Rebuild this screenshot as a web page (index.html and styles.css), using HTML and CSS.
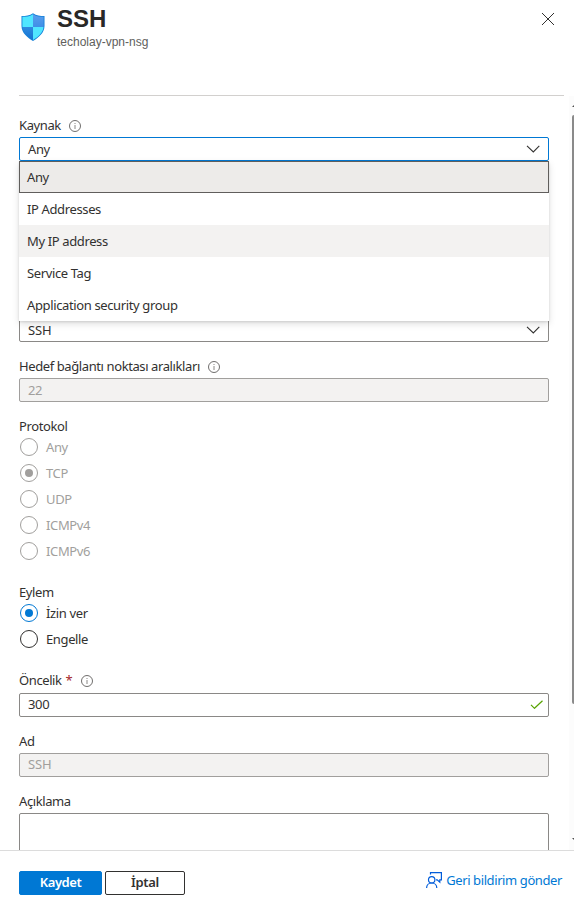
FILE: index.html
```html
<!DOCTYPE html>
<html lang="tr">
<head>
<meta charset="utf-8">
<title>SSH</title>
<link rel="stylesheet" href="styles.css">
</head>
<body>
<svg width="0" height="0" class="defs">
  <defs>
    <linearGradient id="blade-a" x1="0" y1="0" x2="0" y2="1"><stop offset="0" stop-color="#5ea0ef"/><stop offset="1" stop-color="#3f8fe6"/></linearGradient>
    <linearGradient id="blade-b" x1="0" y1="0" x2="0" y2="1"><stop offset="0" stop-color="#2f8ae0"/><stop offset="1" stop-color="#0f70d0"/></linearGradient>
    <clipPath id="shield"><path d="M12 2.200C15.500 4.600 19 4.800 22.600 4.800V14C22.600 20.500 17 24.800 12 28C7 24.800 1.400 20.500 1.400 14V4.800C5 4.800 8.500 4.600 12 2.200Z"/></clipPath>
    <symbol id="info" viewBox="0 0 12 12"><circle cx="6" cy="6" r="5.500" fill="none" stroke="#605e5c" stroke-width=".9"/><path d="M6 5v4M6 3v1" stroke="#8a8886" stroke-width="1"/></symbol>
    <symbol id="chevron" viewBox="0 0 14 8"><path d="M1 .9 7.300 7 13.300.9" fill="none" stroke="#323130" stroke-width="1.100"/></symbol>
  </defs>
</svg>
<div class="blade">
  <header class="header">
    <svg class="shield" width="25" height="30" viewBox="0 0 25 30">
      <path d="M12 1.200C15.500 3.800 19 4 23.500 4V14C23.500 21 17.500 25.600 12 29C6.500 25.600.5 21 .5 14V4C5 4 8.500 3.800 12 1.200Z" fill="#1580d8"/>
      <g clip-path="url(#shield)">
        <path d="M0 0h12v15H0zM12 15h13v15H12z" fill="#50e6ff"/>
        <path d="M12 0h13v15H12z" fill="url(#blade-a)"/>
        <path d="M0 15h12v15H0z" fill="url(#blade-b)"/>
      </g>
    </svg>
    <div class="titles">
      <h1 class="title">SSH</h1>
      <div class="subtitle">techolay-vpn-nsg</div>
    </div>
    <svg class="close" width="14" height="14" viewBox="0 0 14 14"><path d="M1 1l12 12M13 1 1 13" stroke="#323130" stroke-width="1"/></svg>
  </header>

  <main class="content">
    <form class="form">
      <section class="field source">
        <div class="label">Kaynak<svg class="info"><use href="#info"/></svg></div>
        <div class="input focused">Any<svg class="chevron"><use href="#chevron"/></svg></div>
        <div class="menu">
          <div class="option selected">Any</div>
          <div class="option">IP Addresses</div>
          <div class="option hovered">My IP address</div>
          <div class="option">Service Tag</div>
          <div class="option">Application security group</div>
        </div>
      </section>
      <section class="field service">
        <div class="input caps">SSH<svg class="chevron"><use href="#chevron"/></svg></div>
      </section>
      <section class="field">
        <div class="label">Hedef bağlantı noktası aralıkları<svg class="info"><use href="#info"/></svg></div>
        <div class="input disabled">22</div>
      </section>
      <section class="field protocol">
        <div class="label">Protokol</div>
        <div class="radios disabled-group">
          <div class="radio"><i class="dot"></i>Any</div>
          <div class="radio checked"><i class="dot"></i>TCP</div>
          <div class="radio"><i class="dot"></i>UDP</div>
          <div class="radio"><i class="dot"></i>ICMPv4</div>
          <div class="radio"><i class="dot"></i>ICMPv6</div>
        </div>
      </section>
      <section class="field action">
        <div class="label">Eylem</div>
        <div class="radios">
          <div class="radio checked"><i class="dot"></i>İzin ver</div>
          <div class="radio"><i class="dot"></i>Engelle</div>
        </div>
      </section>
      <section class="field">
        <div class="label priority">Öncelik<span class="required">*</span><svg class="info"><use href="#info"/></svg></div>
        <div class="input text">300<svg class="check" width="13" height="9" viewBox="0 0 13 9"><path d="M1 4.800 4.500 8.300 12.500.8" fill="none" stroke="#57a300" stroke-width="1.200"/></svg></div>
      </section>
      <section class="field">
        <div class="label">Ad</div>
        <div class="input text caps disabled">SSH</div>
      </section>
      <section class="field">
        <div class="label">Açıklama</div>
        <div class="input textarea"></div>
      </section>
    </form>
    <div class="scrollbar">
      <svg width="2" height="2" viewBox="0 0 2 2"><path d="M0 2 2 0v2z" fill="#505050"/></svg>
      <div class="thumb"></div>
      <svg class="down" width="2" height="2" viewBox="0 0 2 2"><path d="M0 0 2 2V0z" fill="#505050"/></svg>
    </div>
  </main>

  <footer class="footer">
    <div class="button primary">Kaydet</div>
    <div class="button">İptal</div>
    <div class="feedback">
      <svg width="16" height="16" viewBox="0 0 16 16" fill="none" stroke="#015cda" stroke-width="1.200"><path d="M4.500 2.500V.6h10.900v7.200h-1.600v2.400L11.200 7.800H10"/><circle cx="5.700" cy="7.800" r="3.200"/><path d="M.6 16c0-3 2.200-5 5.100-5s5.100 2 5.100 5"/></svg>
      <span>Geri bildirim gönder</span>
    </div>
  </footer>
</div>
</body>
</html>
```
FILE: styles.css
```css
* { box-sizing: border-box; }
body {
  margin: 0;
  background: #fff;
  color: #323130;
  font: 13px/18px "Noto Sans", sans-serif;
  letter-spacing: -.37px;
}
.defs { position: absolute; }
.blade { display: flex; flex-direction: column; height: 919px; overflow: hidden; }

.header {
  display: flex;
  align-items: flex-start;
  height: 96px;
  margin: 0 10px 0 19px;
  border-bottom: 1px solid #d2d0ce;
  font-family: "Liberation Sans", sans-serif;
  letter-spacing: 0;
}
.shield { margin: 12px 0 0 2px; }
.titles { flex: 1; padding: 5px 0 0 11px; }
.title { margin: 0; font-size: 24px; line-height: 28px; color: #292827; }
.subtitle { font-size: 12px; line-height: 18px; color: #605e5c; }
.close { margin: 12px 9px 0 0; }

.content { display: flex; flex: 1; min-height: 0; overflow: hidden; }
.form { width: 530px; margin: 20px 20px 0 19px; }
.field { margin-bottom: 15px; }
.source { position: relative; margin-bottom: 157px; }
.protocol { margin-bottom: 23px; }
.action { margin-bottom: 23px; }
.label { display: flex; align-items: center; height: 21px; padding-bottom: 3px; letter-spacing: -.4px; }
.priority { height: 22px; padding-bottom: 4px; }
.info { width: 12px; height: 12px; margin: 2px 0 0 8.400px; }
.required { margin-left: 4px; color: #a4262c; }
.input {
  display: flex;
  align-items: center;
  justify-content: space-between;
  height: 24px;
  padding: 0 8px;
  border: 1px solid #8a8886;
  border-radius: 2px;
}
.text { padding-bottom: 2px; }
.caps { letter-spacing: -.1px; }
.focused { border-color: #0078d4; }
.disabled { background: #f3f2f1; border-color: #a19f9d; color: #a19f9d; }
.textarea { height: 80px; }
.chevron { width: 14px; height: 8px; }
.check { margin: 1px -3px 0 0; }

.menu {
  position: absolute;
  top: 45px;
  left: 0;
  width: 530px;
  background: #fff;
  box-shadow: 0 3px 7px rgba(0, 0, 0, .13), 0 1px 2px rgba(0, 0, 0, .11);
}
.option { height: 32px; padding: 0 8px; line-height: 32px; }
.selected { border: 1px solid #605e5c; background: #edebe9; padding: 0 7px; line-height: 30px; }
.hovered { background: #f3f2f1; }

.radios { display: flex; flex-direction: column; gap: 8px; padding-left: 1px; }
.radio { display: flex; align-items: center; gap: 8px; height: 18px; }
.dot {
  display: flex;
  width: 18px;
  height: 18px;
  border: 1px solid #323130;
  border-radius: 50%;
}
.checked .dot { border-color: #0078d4; }
.checked .dot::after { content: ""; width: 8px; height: 8px; margin: auto; border-radius: 50%; background: #0078d4; }
.disabled-group { color: #a19f9d; }
.disabled-group .dot { border-color: #a19f9d; }
.disabled-group .checked .dot::after { background: #a19f9d; }

.scrollbar { display: flex; flex-direction: column; width: 5px; padding-top: 9px; margin-left: auto; background: #fcfcfc; }
.scrollbar svg { align-self: flex-end; }
.thumb { height: 589px; margin: 8px 0 0 3px; background: #8a8a8a; border-radius: 3px 0 0 3px; }
.scrollbar .down { margin: auto 0 10px; }

.footer { display: flex; align-items: flex-start; gap: 3px; height: 69px; padding: 20px 12px 0 19px; border-top: 1px solid #dcdcdc; }
.button { width: 80px; height: 24px; border: 1px solid #323130; border-radius: 2px; font-weight: 600; line-height: 20px; text-align: center; letter-spacing: -.3px; }
.primary { width: 83px; border-color: #0078d4; background: #0078d4; color: #fff; letter-spacing: -.45px; }
.feedback { display: flex; align-items: center; gap: 4px; height: 18px; margin-left: auto; color: #0078d4; letter-spacing: -.4px; }
```
